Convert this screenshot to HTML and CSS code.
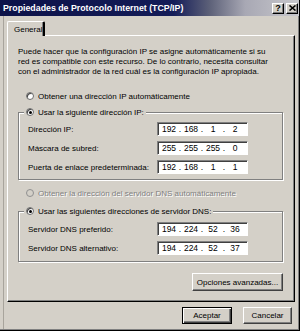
FILE: index.html
```html
<!DOCTYPE html>
<html lang="es">
<head>
<meta charset="utf-8">
<title>Propiedades de Protocolo Internet (TCP/IP)</title>
<link rel="stylesheet" href="styles.css">
</head>
<body>
<div class="window">
  <div class="titlebar">
    <span class="title">Propiedades de Protocolo Internet (TCP/IP)</span>
    <div class="tbtns">
      <span class="tbtn help">?</span>
      <span class="tbtn close"><svg width="7" height="6" viewBox="0 0 7 6"><path d="M0.5 0.5 L6.5 5.5 M6.5 0.5 L0.5 5.5" stroke="#000" stroke-width="1.6" fill="none"/></svg></span>
    </div>
  </div>
  <div class="content">
    <div class="tabs"><div class="tab">General</div></div>
    <div class="panel">
      <p class="intro">Puede hacer que la configuración IP se asigne automáticamente si su<br>red es compatible con este recurso. De lo contrario, necesita consultar<br>con el administrador de la red cuál es la configuración IP apropiada.</p>
      <div class="opt opt-first"><span class="radio"></span>Obtener una dirección IP automáticamente</div>
      <fieldset class="group group-ip">
        <legend><span class="radio checked"></span>Usar la siguiente dirección IP:</legend>
        <div class="row"><span class="lbl">Dirección IP:</span><span class="ip"><span class="seg">192</span><span class="dot">.</span><span class="seg">168</span><span class="dot">.</span><span class="seg">1</span><span class="dot">.</span><span class="seg">2</span></span></div>
        <div class="row"><span class="lbl">Máscara de subred:</span><span class="ip"><span class="seg">255</span><span class="dot">.</span><span class="seg">255</span><span class="dot">.</span><span class="seg">255</span><span class="dot">.</span><span class="seg">0</span></span></div>
        <div class="row"><span class="lbl">Puerta de enlace predeterminada:</span><span class="ip"><span class="seg">192</span><span class="dot">.</span><span class="seg">168</span><span class="dot">.</span><span class="seg">1</span><span class="dot">.</span><span class="seg">1</span></span></div>
      </fieldset>
      <div class="opt opt-dns disabled"><span class="radio"></span>Obtener la dirección del servidor DNS automáticamente</div>
      <fieldset class="group group-dns">
        <legend><span class="radio checked"></span>Usar las siguientes direcciones de servidor DNS:</legend>
        <div class="row"><span class="lbl">Servidor DNS preferido:</span><span class="ip"><span class="seg">194</span><span class="dot">.</span><span class="seg">224</span><span class="dot">.</span><span class="seg">52</span><span class="dot">.</span><span class="seg">36</span></span></div>
        <div class="row"><span class="lbl">Servidor DNS alternativo:</span><span class="ip"><span class="seg">194</span><span class="dot">.</span><span class="seg">224</span><span class="dot">.</span><span class="seg">52</span><span class="dot">.</span><span class="seg">37</span></span></div>
      </fieldset>
      <div class="adv"><button class="btn btn-adv">Opciones avanzadas...</button></div>
    </div>
    <div class="footer">
      <button class="btn btn-ok">Aceptar</button>
      <button class="btn btn-cancel">Cancelar</button>
    </div>
  </div>
</div>
</body>
</html>
```
FILE: styles.css
```css
html, body {
  margin: 0;
  padding: 0;
  background: #d4d0c8;
}

body {
  font-family: "Liberation Sans", Arial, sans-serif;
  font-size: 8px;
  color: #000;
}

.window {
  width: 300px;
  height: 331px;
  box-sizing: border-box;
  background: #d4d0c8;
  border-right: 1px solid #000;
  border-bottom: 1px solid #000;
  box-shadow: inset -1px -1px 0 #808080, inset 3px 0 0 #d4d0c8, inset 4px 0 0 #a8a49c;
  display: flex;
  flex-direction: column;
}

.titlebar {
  height: 16px;
  flex: none;
  display: flex;
  align-items: center;
  justify-content: space-between;
  padding: 0 1px 0 3px;
  background: linear-gradient(90deg, #0c1248 0%, #141c58 58%, #5c6078 70%, #a8a8b4 82%, #c8c8cc 100%);
}

.title {
  color: #fff;
  font-weight: bold;
  font-size: 8.8px;
  white-space: nowrap;
}

.tbtns {
  display: flex;
  gap: 2px;
}

.tbtn {
  width: 12px;
  height: 11px;
  box-sizing: border-box;
  background: #d4d0c8;
  border: 1px solid;
  border-color: #fff #000 #000 #fff;
  box-shadow: inset -1px -1px 0 #808080;
  display: flex;
  align-items: center;
  justify-content: center;
  font-weight: bold;
  font-size: 9px;
  line-height: 1;
}

.content {
  flex: 1;
  display: flex;
  flex-direction: column;
  padding: 5px 4px 0 7px;
}

.tabs {
  display: flex;
  height: 14px;
  position: relative;
  z-index: 1;
}

.tab {
  width: 38px;
  height: 15px;
  box-sizing: border-box;
  background: #d4d0c8;
  border-top: 1px solid #fff;
  border-left: 1px solid #fff;
  border-right: 2px solid #000;
  box-shadow: inset -1px 0 0 #808080;
  border-radius: 2px 2px 0 0;
  display: flex;
  align-items: center;
  padding-left: 6px;
  font-size: 8px;
}

.panel {
  height: 267px;
  box-sizing: border-box;
  background: #d4d0c8;
  border-top: 1px solid #fff;
  border-left: 1px solid #fff;
  border-right: 1px solid #000;
  border-bottom: 1px solid #000;
  box-shadow: inset -1px -1px 0 #808080;
  padding: 11px 11px 0 10px;
  display: flex;
  flex-direction: column;
}

.intro {
  margin: 0;
  line-height: 10px;
  white-space: nowrap;
}

.opt {
  display: flex;
  align-items: center;
  height: 12px;
  margin-left: 8px;
  white-space: nowrap;
}

.opt-first {
  margin-top: 13px;
}

.opt-dns {
  margin-top: 7px;
}

.disabled {
  color: #808080;
  text-shadow: 1px 1px 0 #fff;
}

.radio {
  width: 8px;
  height: 8px;
  box-sizing: border-box;
  border-radius: 50%;
  border: 1px solid #6e6e6e;
  background: #fff;
  margin-right: 4px;
  flex: none;
  display: inline-flex;
  align-items: center;
  justify-content: center;
  box-shadow: inset 1px 1px 0 #404040;
}

.disabled .radio {
  background: #d4d0c8;
  border-color: #909090;
  box-shadow: none;
}

.radio.checked::after {
  content: "";
  width: 3px;
  height: 3px;
  border-radius: 50%;
  background: #000;
}

.group {
  margin: 4px 0 0 0;
  padding: 0 0 6px 5px;
  border: 1px solid #808080;
  box-shadow: 1px 1px 0 #fff, inset 1px 1px 0 #fff;
  min-width: 0;
}

.group-ip {
  padding-bottom: 5px;
}

.group-dns {
  margin-top: 6px;
}

.group legend {
  padding: 0 2px;
  height: 12px;
  display: flex;
  align-items: center;
  background: #d4d0c8;
  white-space: nowrap;
}

.row {
  display: grid;
  grid-template-columns: 129px 91px;
  align-items: center;
  padding-left: 4px;
  height: 14px;
  margin-top: 5px;
}

.group .row:first-of-type {
  margin-top: 4px;
}

.group-dns .row:first-of-type {
  margin-top: 5px;
}

.lbl {
  white-space: nowrap;
}

.ip {
  height: 14px;
  box-sizing: border-box;
  background: #fff;
  border: 1px solid;
  border-color: #808080 #fff #fff #808080;
  box-shadow: inset 1px 1px 0 #404040;
  display: flex;
  align-items: center;
  padding-left: 2px;
  font-size: 8.5px;
}

.seg {
  width: 18px;
  text-align: center;
}

.dot {
  width: 4px;
  text-align: center;
}

.adv {
  display: flex;
  justify-content: flex-end;
  margin-top: 11px;
}

.btn {
  font-family: inherit;
  font-size: 8px;
  color: #000;
  background: #d4d0c8;
  border: 1px solid;
  border-color: #fff #404040 #404040 #fff;
  box-shadow: inset -1px -1px 0 #808080;
  padding: 0;
  margin: 0;
  box-sizing: border-box;
}

.btn-adv {
  width: 91px;
  height: 18px;
}

.footer {
  display: flex;
  justify-content: flex-end;
  gap: 11px;
  padding-right: 3px;
  margin-top: 5px;
}

.btn-ok {
  width: 50px;
  height: 17px;
  border: 1px solid #000;
  box-shadow: inset 1px 1px 0 #fff, inset -1px -1px 0 #404040, inset -2px -2px 0 #808080;
}

.btn-cancel {
  width: 49px;
  height: 17px;
}
```
